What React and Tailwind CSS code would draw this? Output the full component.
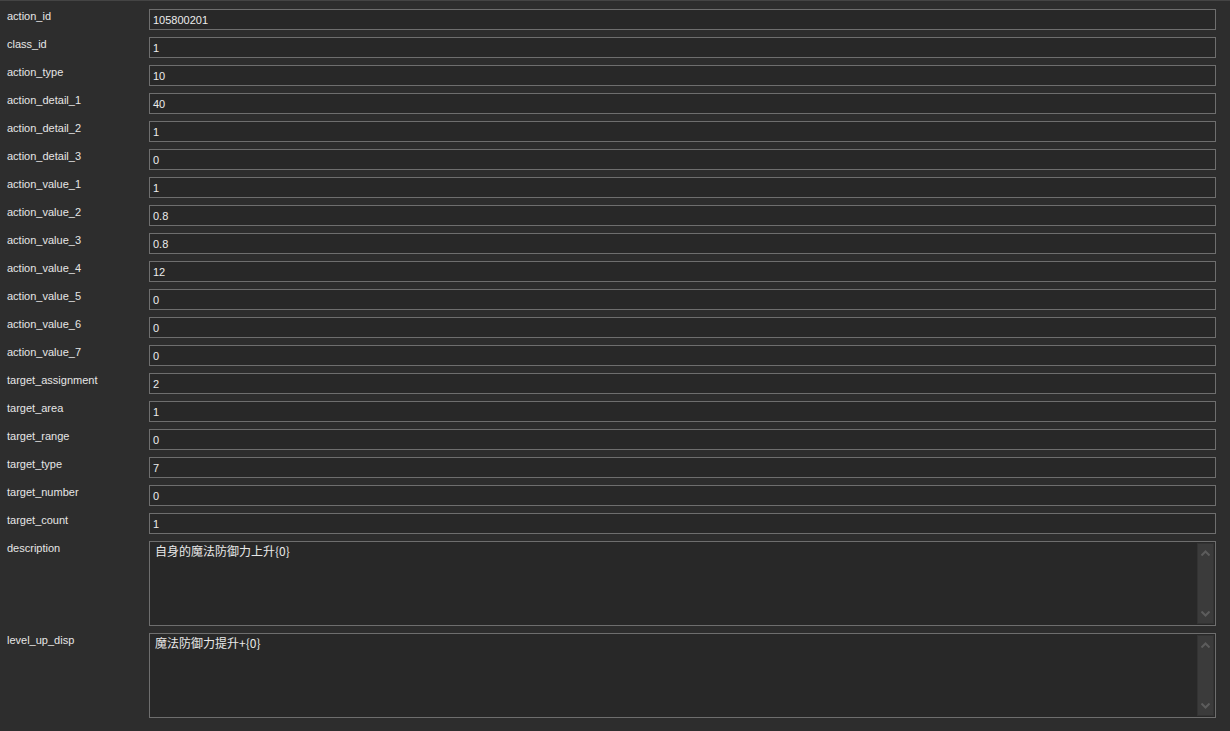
import React from "react";

const rows = [
  ["action_id", "105800201"],
  ["class_id", "1"],
  ["action_type", "10"],
  ["action_detail_1", "40"],
  ["action_detail_2", "1"],
  ["action_detail_3", "0"],
  ["action_value_1", "1"],
  ["action_value_2", "0.8"],
  ["action_value_3", "0.8"],
  ["action_value_4", "12"],
  ["action_value_5", "0"],
  ["action_value_6", "0"],
  ["action_value_7", "0"],
  ["target_assignment", "2"],
  ["target_area", "1"],
  ["target_range", "0"],
  ["target_type", "7"],
  ["target_number", "0"],
  ["target_count", "1"],
];

const font = { fontFamily: '"Liberation Sans", Arial, sans-serif' };

function Chevron({ up }) {
  return (
    <svg width="9" height="6" viewBox="0 0 9 6" className="block">
      <path
        d={up ? "M0.5 5.5 L4.5 1.5 L8.5 5.5" : "M0.5 0.5 L4.5 4.5 L8.5 0.5"}
        fill="none"
        stroke="#5c5c5c"
        strokeWidth="2"
      />
    </svg>
  );
}

function TextArea({ text }) {
  return (
    <div className="relative h-[85px] border border-[#6e6e6e] bg-[#282828]">
      <div
        className="pl-[5px] pt-[1px] text-[12px] leading-[16px] text-[#e8e8e8]"
        style={{ fontFamily: '"Noto Sans CJK SC", "Liberation Sans", sans-serif' }}
      >
        {text}
      </div>
      <div className="absolute right-[1px] top-[1px] bottom-[1px] w-[17px] bg-[#3b3b3b] border border-[#333] flex flex-col items-center justify-between py-[6px]">
        <Chevron up />
        <Chevron />
      </div>
    </div>
  );
}

export default function App() {
  return (
    <div className="w-[1230px] h-[731px] bg-[#2d2d2d] border-t border-[#444] overflow-hidden" style={font}>
      <div className="grid grid-cols-[149px_1fr] gap-y-[7px] pt-[8px] pr-[14px]">
        {rows.map(([k, v]) => (
          <React.Fragment key={k}>
            <div className="pl-[7px] text-[11px] leading-[14px] text-[#e6e6e6]">{k}</div>
            <div className="h-[21px] border border-[#6e6e6e] bg-[#282828] pl-[3px] text-[11px] leading-[19px] pt-[1px] text-[#ececec]">
              {v}
            </div>
          </React.Fragment>
        ))}
        <div className="pl-[7px] text-[11px] leading-[14px] text-[#e6e6e6]">description</div>
        <TextArea text="自身的魔法防御力上升{0}" />
        <div className="pl-[7px] text-[11px] leading-[14px] text-[#e6e6e6]">level_up_disp</div>
        <TextArea text="魔法防御力提升+{0}" />
      </div>
    </div>
  );
}
